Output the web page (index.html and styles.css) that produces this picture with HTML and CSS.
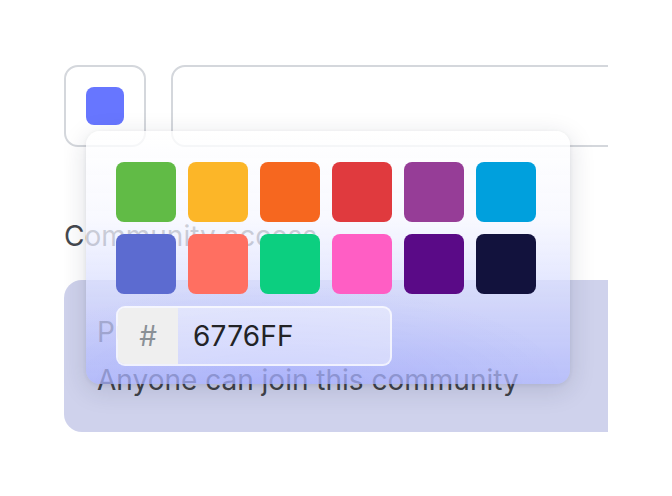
FILE: index.html
```html
<!DOCTYPE html>
<html lang="en">
<head>
<meta charset="utf-8">
<title>Community settings</title>
<link rel="stylesheet" href="styles.css">
</head>
<body>
<main class="page">
  <form class="form">
    <div class="row">
      <div class="picker">
        <button type="button" class="swatch-btn" aria-label="Community colour">
          <span class="swatch-dot"></span>
        </button>
        <div class="popover">
          <div class="grid">
            <span class="sw" style="background:#61bb46"></span>
            <span class="sw" style="background:#fcb628"></span>
            <span class="sw" style="background:#f6671f"></span>
            <span class="sw" style="background:#e03a3e"></span>
            <span class="sw" style="background:#963d97"></span>
            <span class="sw" style="background:#00a0dd"></span>
            <span class="sw" style="background:#5c6bd0"></span>
            <span class="sw" style="background:#ff6f61"></span>
            <span class="sw" style="background:#0ccf80"></span>
            <span class="sw" style="background:#ff5ec4"></span>
            <span class="sw" style="background:#5a0a87"></span>
            <span class="sw" style="background:#12123d"></span>
          </div>
          <div class="hex">
            <span class="hex-prefix">#</span>
            <span class="hex-value">6776FF</span>
          </div>
        </div>
      </div>
      <div class="name-input"></div>
    </div>
    <div class="label">Community access</div>
    <div class="option">
      <div class="option-title">Public</div>
      <div class="option-desc">Anyone can join this community</div>
    </div>
  </form>
</main>
</body>
</html>
```

FILE: styles.css
```css
* { box-sizing: border-box; }

html, body {
  margin: 0;
  padding: 0;
  background: #ffffff;
}

body {
  font-family: Inter, "Noto Sans", sans-serif;
  color: #3f4248;
}

.page {
  width: 672px;
  height: 496px;
  padding: 65px 64px 0 64px;
}

.form {
  width: 544px;
  overflow: hidden;
  margin: 0;
  padding-bottom: 40px;
}

.row {
  display: flex;
  gap: 25px;
  align-items: flex-start;
}

.picker {
  position: relative;
  flex: none;
}

.swatch-btn {
  width: 82px;
  height: 82px;
  border: 2px solid #d4d7dc;
  border-radius: 14px;
  background: #ffffff;
  padding: 0;
  margin: 0;
  display: flex;
  align-items: center;
  justify-content: center;
}

.swatch-dot {
  width: 38px;
  height: 38px;
  border-radius: 8px;
  background: #6776ff;
}

.name-input {
  flex: none;
  width: 480px;
  height: 82px;
  border: 2px solid #d4d7dc;
  border-radius: 14px;
  background: #ffffff;
}

.popover {
  position: absolute;
  left: 22px;
  top: 66px;
  z-index: 10;
  width: 484px;
  padding: 31px 34px 18px 30px;
  border-radius: 14px;
  background:
    radial-gradient(ellipse 60% 40% at 40% 100%, rgba(120, 132, 255, 0.2), rgba(120, 132, 255, 0) 100%),
    linear-gradient(180deg,
      rgba(255, 255, 255, 0.8) 0%,
      rgba(246, 247, 255, 0.78) 35%,
      rgba(224, 228, 255, 0.76) 55%,
      rgba(175, 183, 255, 0.7) 100%);
  box-shadow: 0 6px 26px rgba(30, 34, 60, 0.15), 0 1px 4px rgba(30, 34, 60, 0.07);
  display: flex;
  flex-direction: column;
  gap: 12px;
}

.grid {
  display: grid;
  grid-template-columns: repeat(6, 60px);
  grid-auto-rows: 60px;
  gap: 12px;
}

.sw {
  display: block;
  border-radius: 8px;
}

.hex {
  display: flex;
  width: 276px;
  height: 60px;
  border: 2px solid rgba(255, 255, 255, 0.65);
  border-radius: 9px;
  overflow: hidden;
  background: rgba(255, 255, 255, 0.42);
}

.hex-prefix {
  flex: none;
  width: 60px;
  display: flex;
  align-items: center;
  justify-content: center;
  background: #efefef;
  color: #8a9096;
  font-size: 28px;
}

.hex-value {
  display: flex;
  align-items: center;
  padding-left: 15px;
  font-size: 28px;
  color: #222326;
  letter-spacing: 0.2px;
}

.label {
  margin-top: 69px;
  font-size: 28px;
  line-height: 40px;
  color: #45484e;
}

.option {
  margin-top: 24px;
  width: 600px;
  height: 152px;
  padding: 32px 33px;
  border-radius: 18px;
  background: #cfd2ec;
  display: flex;
  flex-direction: column;
  gap: 8px;
}

.option-title {
  font-size: 28px;
  line-height: 40px;
  color: #3f4248;
}

.option-desc {
  font-size: 28px;
  line-height: 40px;
  color: #3f4248;
}
```
